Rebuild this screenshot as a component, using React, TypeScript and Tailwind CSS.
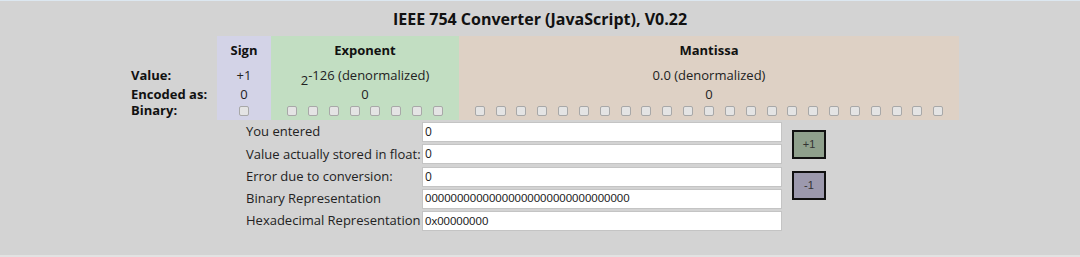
import React from "react";

const Box = () => (
  <div className="w-[10px] h-[10px] shrink-0 rounded-[2px] border border-[#a8a8a8] bg-[#e4e4e4]" />
);

const Boxes = ({ n }: { n: number }) => (
  <div className="flex justify-center gap-[10.85px]">
    {Array.from({ length: n }).map((_, i) => (
      <Box key={i} />
    ))}
  </div>
);

const Column = ({
  bg,
  width,
  title,
  value,
  encoded,
  bits,
}: {
  bg: string;
  width: string;
  title: string;
  value: React.ReactNode;
  encoded: string;
  bits: number;
}) => (
  <div className={`flex flex-col ${bg} ${width} h-[84px]`}>
    <div className="h-[30px] flex items-center justify-center font-bold text-[13px] text-[#111]">{title}</div>
    <div className="h-[19px] flex items-center justify-center text-[13px] text-[#222]">{value}</div>
    <div className="h-[19px] flex items-center justify-center text-[13px] text-[#222]">{encoded}</div>
    <div className="h-[14px] flex items-center justify-center">
      <Boxes n={bits} />
    </div>
  </div>
);

const rows: { label: string; value: string; mono?: boolean }[] = [
  { label: "You entered", value: "0" },
  { label: "Value actually stored in float:", value: "0" },
  { label: "Error due to conversion:", value: "0" },
  { label: "Binary Representation", value: "00000000000000000000000000000000", mono: true },
  { label: "Hexadecimal Representation", value: "0x00000000", mono: true },
];

export default function App() {
  return (
    <div
      className="w-[1080px] h-[257px] bg-[#d3d3d3] border-t border-[#dce7f0] border-b-2 border-b-[#e2e2e2] text-[#222] overflow-hidden"
      style={{ fontFamily: '"Open Sans", "Noto Sans", sans-serif' }}
    >
      <div className="h-[35px] flex items-center justify-center font-bold text-[16px] text-[#111]">
        IEEE 754 Converter (JavaScript), V0.22
      </div>

      <div className="flex pl-[127px]">
        <div className="w-[90px] flex flex-col pl-[4px] font-bold text-[13px] text-[#111]">
          <div className="h-[30px]" />
          <div className="h-[19px] flex items-center">Value:</div>
          <div className="h-[19px] flex items-center">Encoded as:</div>
          <div className="h-[14px] flex items-center">Binary:</div>
        </div>
        <Column bg="bg-[#d3d3e7]" width="w-[54px]" title="Sign" value="+1" encoded="0" bits={1} />
        <Column
          bg="bg-[#c2dec2]"
          width="w-[188px]"
          title="Exponent"
          value={
            <span>
              <span className="relative top-[5px]">2</span>-126 (denormalized)
            </span>
          }
          encoded="0"
          bits={8}
        />
        <Column
          bg="bg-[#ded1c5]"
          width="w-[500px]"
          title="Mantissa"
          value="0.0 (denormalized)"
          encoded="0"
          bits={23}
        />
      </div>

      <div className="flex pl-[246px] mt-[2px]">
        <div className="flex flex-col gap-[2.3px]">
          {rows.map((r) => (
            <div key={r.label} className="flex items-center h-[20px]">
              <div className="w-[176px] text-[13px] text-[#222] whitespace-nowrap">{r.label}</div>
              <div
                className="w-[360px] h-[20px] bg-white border border-[#c4c4c4] flex items-center pl-[2px] text-[#222]"
                style={
                  r.mono
                    ? { fontFamily: '"Liberation Sans", Arial, sans-serif', fontSize: "11.5px" }
                    : { fontSize: "12px" }
                }
              >
                {r.value}
              </div>
            </div>
          ))}
        </div>
        <div className="flex flex-col ml-[10px] pt-[8px] gap-[12px]">
          <button
            className="w-[34px] h-[29px] bg-[#8fa08c] border-2 border-[#111] text-[11px] text-[#333] flex items-center justify-center"
            style={{ fontFamily: '"Liberation Sans", Arial, sans-serif' }}
          >
            +1
          </button>
          <button
            className="w-[34px] h-[29px] bg-[#9c99ad] border-2 border-[#111] text-[11px] text-[#333] flex items-center justify-center"
            style={{ fontFamily: '"Liberation Sans", Arial, sans-serif' }}
          >
            -1
          </button>
        </div>
      </div>
    </div>
  );
}
